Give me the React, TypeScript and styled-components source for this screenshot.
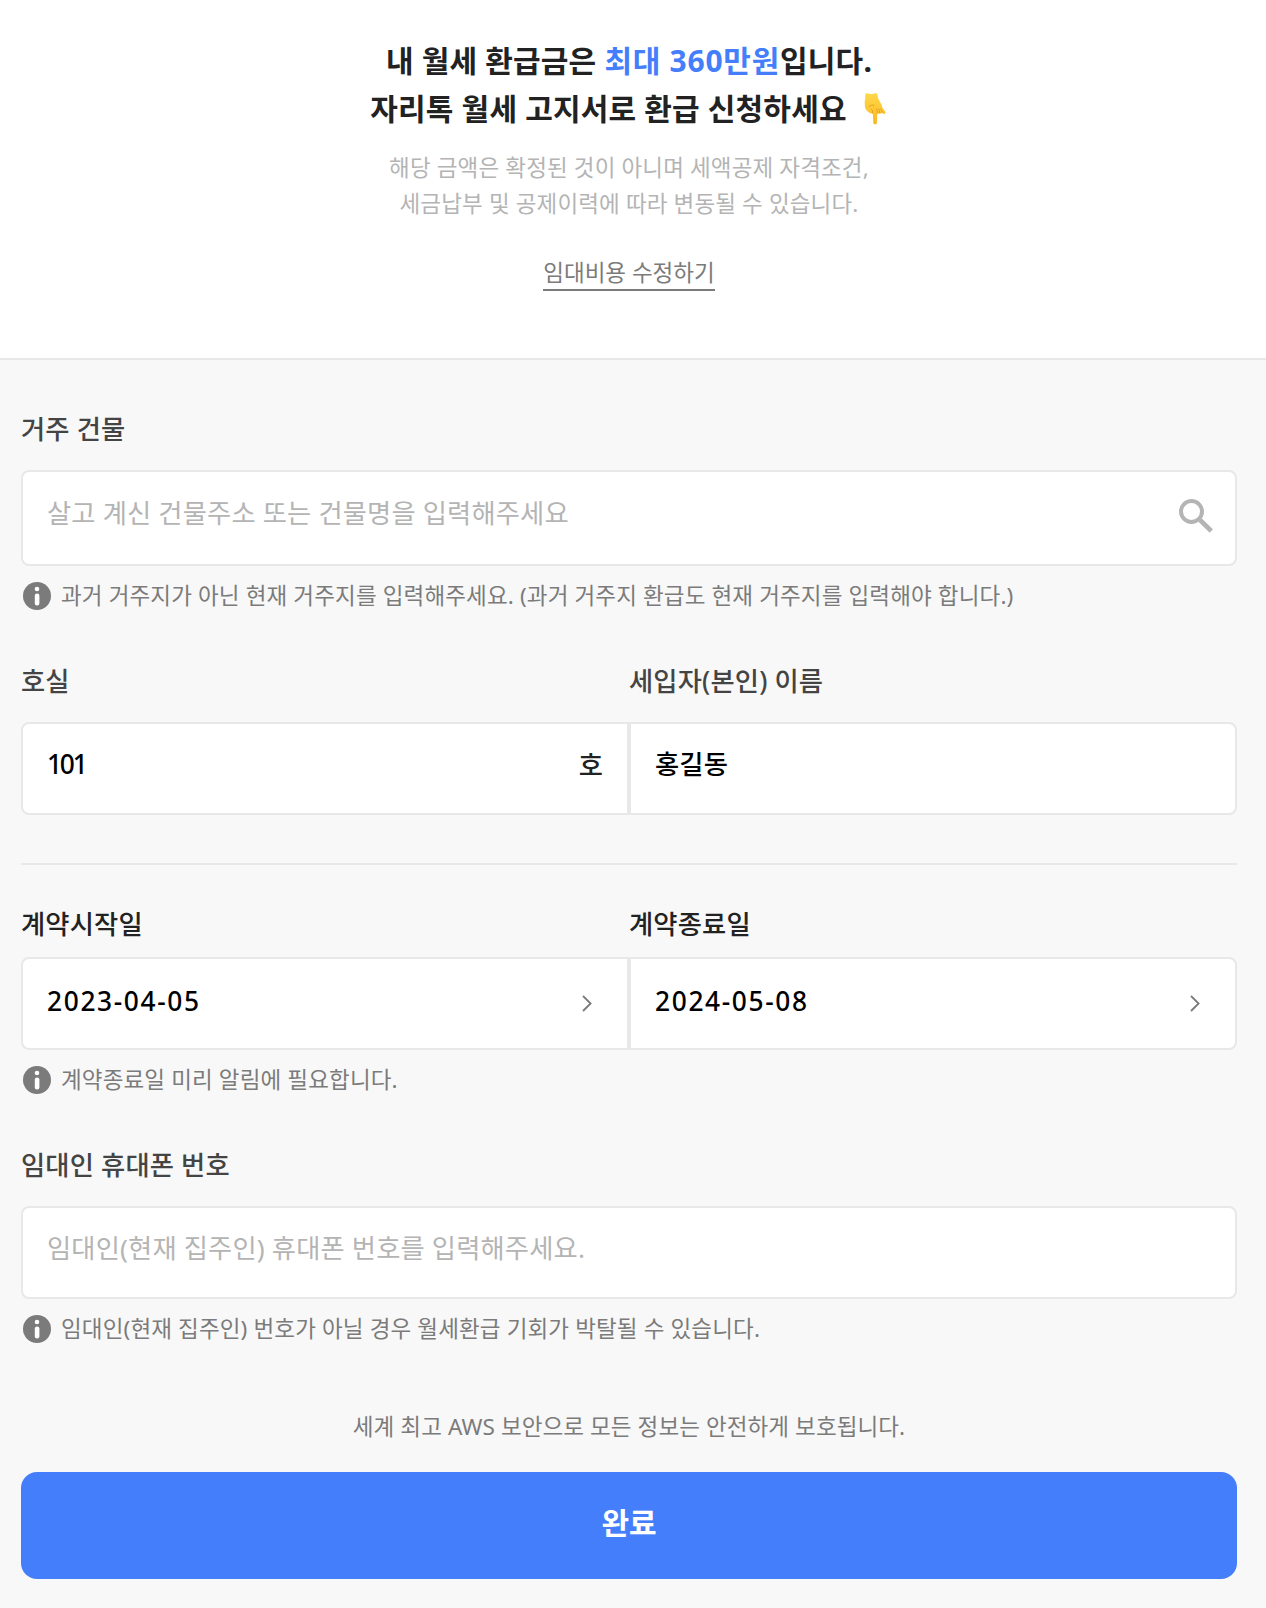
import React from "react";
import styled, { createGlobalStyle } from "styled-components";

const GlobalStyle = createGlobalStyle`
  * { box-sizing: border-box; }
  body {
    margin: 0;
    background: #f8f8f8;
    font-family: "Noto Sans", "Noto Sans CJK KR", sans-serif;
    word-break: keep-all;
  }
`;

const Page = styled.div`
  width: 100%;
  min-height: 1608px;
  background: #f8f8f8;
`;

const Header = styled.header`
  height: 360px;
  padding: 37px 29px 0 21px;
  background: #fff;
  border-bottom: 2px solid #e8e8e8;
  display: flex;
  flex-direction: column;
  align-items: center;
  white-space: nowrap;
`;

const Title = styled.h1`
  margin: 0;
  font-size: 30px;
  font-weight: 700;
  line-height: 48px;
  letter-spacing: 0.18px;
  color: #222;
  text-align: center;
`;

const TitleLine = styled.div`
  display: flex;
  align-items: center;
  justify-content: center;
  white-space: pre;
`;

const Accent = styled.span`
  color: #457efa;
  letter-spacing: 0.75px;
`;

const Notice = styled.div`
  margin-top: 17px;
  font-size: 22.5px;
  line-height: 36px;
  letter-spacing: 0.14px;
  color: #b4b4b4;
  text-align: center;
`;

const EditLink = styled.a`
  margin-top: 31px;
  height: 38px;
  font-size: 22.5px;
  line-height: 40px;
  color: #7b7b7b;
  border-bottom: 2px solid #7b7b7b;
`;

const Main = styled.main`
  padding: 48px 29px 29px 21px;
  display: flex;
  flex-direction: column;
`;

const Columns = styled.div<{ $mt: number }>`
  display: grid;
  grid-template-columns: 1fr 1fr;
  margin-top: ${(p) => p.$mt}px;
`;

const Group = styled.section<{ $mt?: number }>`
  margin-top: ${(p) => p.$mt ?? 0}px;
`;

const Label = styled.div<{ $dark?: boolean; $gap?: number }>`
  height: 40px;
  margin-bottom: ${(p) => p.$gap ?? 22}px;
  font-size: 26.3px;
  font-weight: 500;
  line-height: 42px;
  white-space: nowrap;
  letter-spacing: 0.16px;
  color: ${(p) => (p.$dark ? "#222" : "#444")};
`;

const Field = styled.div<{ $side?: "left" | "right"; $tall?: boolean }>`
  height: ${(p) => (p.$tall ? 96 : 93)}px;
  padding: 0 24px;
  background: #fff;
  border: 2px solid #e8e8e8;
  border-radius: ${(p) => (p.$side === "left" ? "8px 0 0 8px" : p.$side === "right" ? "0 8px 8px 0" : "8px")};
  display: flex;
  align-items: center;
  justify-content: space-between;
`;

const Value = styled.span<{ $ls?: number; $lift?: number }>`
  padding-bottom: ${(p) => p.$lift ?? 9}px;
  font-size: 26.3px;
  font-weight: 500;
  line-height: 40px;
  white-space: nowrap;
  letter-spacing: ${(p) => p.$ls ?? 0.15}px;
  color: #000;
`;

const Hint = styled(Value)`
  padding-bottom: 10px;
  font-weight: 400;
  color: #b4b4b4;
`;

const Unit = styled(Value)`
  padding-bottom: 7px;
  color: #222;
`;

const Help = styled.div`
  height: 28px;
  margin-top: 16px;
  padding-left: 2px;
  display: flex;
  align-items: center;
  gap: 10px;
`;

const HelpText = styled.span`
  font-size: 22.5px;
  line-height: 28px;
  white-space: nowrap;
  letter-spacing: 0.14px;
  color: #7b7b7b;
`;

const Divider = styled.hr`
  width: 100%;
  height: 2px;
  margin: 48px 0 0;
  border: 0;
  background: #e8e8e8;
`;

const Security = styled.p`
  margin: 68px 0 29px;
  font-size: 22.5px;
  line-height: 32px;
  text-align: center;
  letter-spacing: 0.1px;
  color: #7b7b7b;
`;

const Submit = styled.button`
  width: 100%;
  height: 107px;
  padding: 0 0 6px;
  border: 0;
  border-radius: 16px;
  background: #457efa;
  color: #fff;
  font-family: inherit;
  font-size: 30px;
  font-weight: 700;
  line-height: 40px;
`;

const InfoIcon = () => (
  <svg width="28" height="28" viewBox="0 0 28 28" aria-hidden="true">
    <circle cx="14" cy="14" r="14" fill="#7b7b7b" />
    <circle cx="14" cy="7" r="2.3" fill="#fff" />
    <rect x="11.8" y="11.4" width="4.6" height="12" rx="2.2" fill="#fff" />
  </svg>
);

const SearchSlot = styled.span`
  display: flex;
  margin-right: -2px;
  padding-bottom: 4px;
`;

const SearchIcon = () => (
  <SearchSlot>
    <svg width="34" height="34" viewBox="0 0 34 34" fill="none" stroke="#b4b4b4" aria-hidden="true">
      <circle cx="12.5" cy="12.5" r="10.5" strokeWidth="4" />
      <path d="M21 21 L32.3 32" strokeWidth="4.6" />
    </svg>
  </SearchSlot>
);

const ArrowSlot = styled.span`
  display: flex;
  margin-right: 11px;
`;

const Arrow = () => (
  <ArrowSlot>
    <svg width="10" height="17" viewBox="0 0 10 17" fill="none" stroke="#7b7b7b" strokeWidth="1.8" aria-hidden="true">
      <path d="M1 1 L8.6 8.5 L1 16" />
    </svg>
  </ArrowSlot>
);

const HandSlot = styled.span`
  display: flex;
  margin-left: 13px;
  margin-right: -2px;
`;

const PointingHand = () => (
  <HandSlot>
    <svg width="30" height="34" viewBox="0 0 30 34" aria-hidden="true">
      <defs>
        <linearGradient id="skin" x1="0" y1="0" x2="0" y2="1">
          <stop offset="0" stopColor="#ffd84a" />
          <stop offset="1" stopColor="#fbb822" />
        </linearGradient>
      </defs>
      <path
        d="M6.2 1.2 Q11 2.7 16 1.2 Q17.4 0.9 17.5 2.7 Q17.4 6 19.8 9.5 Q22 12.5 22.5 16 L25.3 19.6 Q26.2 21.2 24.7 21.9 Q23.2 22.2 22.1 20.7 Q20.9 22.2 19.4 21.2 Q18.4 22.2 17.2 21.7 L17 30.6 Q16.8 32.5 15.1 32.5 Q13.3 32.5 13.2 30.6 L12.8 21.4 Q9.5 22 6.8 18.5 Q4.5 16.8 4.8 13 L4.7 9 Q5.8 6.5 5.2 3 Q5.1 1.1 6.2 1.2 Z"
        fill="url(#skin)"
      />
      <path
        d="M9.2 14.3 Q11.5 12 14 13.2 M12.7 21.1 Q13.4 18.3 11.5 17.2 M17.2 21.3 Q17.5 18.5 16.6 17 M19.5 21 Q20 18.5 18.8 16.8 M22 20.5 Q22 18.3 21 16.8"
        fill="none"
        stroke="#e2971b"
        strokeWidth="0.8"
        strokeLinecap="round"
      />
    </svg>
  </HandSlot>
);

export default function App() {
  return (
    <Page>
      <GlobalStyle />
      <Header>
        <Title>
          <TitleLine>
            내 월세 환급금은 <Accent>최대 360만원</Accent>입니다.
          </TitleLine>
          <TitleLine>
            자리톡 월세 고지서로 환급 신청하세요
            <PointingHand />
          </TitleLine>
        </Title>
        <Notice>
          <div>해당 금액은 확정된 것이 아니며 세액공제 자격조건,</div>
          <div>세금납부 및 공제이력에 따라 변동될 수 있습니다.</div>
        </Notice>
        <EditLink>임대비용 수정하기</EditLink>
      </Header>
      <Main>
        <Group>
          <Label>거주 건물</Label>
          <Field $tall>
            <Hint>살고 계신 건물주소 또는 건물명을 입력해주세요</Hint>
            <SearchIcon />
          </Field>
          <Help>
            <InfoIcon />
            <HelpText>
              과거 거주지가 아닌 현재 거주지를 입력해주세요. (과거 거주지 환급도 현재 거주지를 입력해야 합니다.)
            </HelpText>
          </Help>
        </Group>
        <Columns $mt={50}>
          <Group>
            <Label>호실</Label>
            <Field $side="left">
              <Value $ls={-2.2}>101</Value>
              <Unit>호</Unit>
            </Field>
          </Group>
          <Group>
            <Label>세입자(본인) 이름</Label>
            <Field $side="right">
              <Value>홍길동</Value>
            </Field>
          </Group>
        </Columns>
        <Divider />
        <Columns $mt={38}>
          <Group>
            <Label $dark $gap={14}>계약시작일</Label>
            <Field $side="left">
              <Value $ls={1.65} $lift={5}>2023-04-05</Value>
              <Arrow />
            </Field>
          </Group>
          <Group>
            <Label $dark $gap={14}>계약종료일</Label>
            <Field $side="right">
              <Value $ls={1.65} $lift={5}>2024-05-08</Value>
              <Arrow />
            </Field>
          </Group>
        </Columns>
        <Help>
          <InfoIcon />
          <HelpText>계약종료일 미리 알림에 필요합니다.</HelpText>
        </Help>
        <Group $mt={50}>
          <Label>임대인 휴대폰 번호</Label>
          <Field>
            <Hint>임대인(현재 집주인) 휴대폰 번호를 입력해주세요.</Hint>
          </Field>
          <Help>
            <InfoIcon />
            <HelpText>임대인(현재 집주인) 번호가 아닐 경우 월세환급 기회가 박탈될 수 있습니다.</HelpText>
          </Help>
        </Group>
        <Security>세계 최고 AWS 보안으로 모든 정보는 안전하게 보호됩니다.</Security>
        <Submit type="button">완료</Submit>
      </Main>
    </Page>
  );
}
